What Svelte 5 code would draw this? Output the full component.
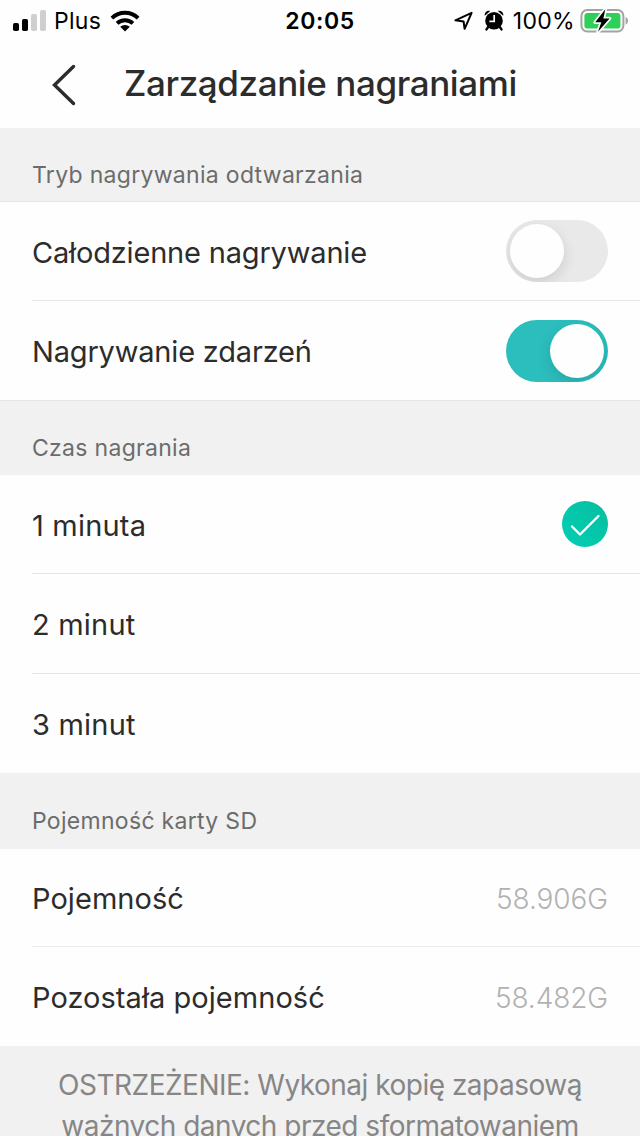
<script lang="ts">
	interface Option {
		id: number;
		label: string;
	}

	const durations: Option[] = [
		{ id: 1, label: '1 minuta' },
		{ id: 2, label: '2 minut' },
		{ id: 3, label: '3 minut' }
	];

	let allDay = $state(false);
	let events = $state(true);
	let duration = $state(1);
</script>

{#snippet toggle(label: string, checked: boolean, onclick: () => void)}
	<button
		type="button"
		class="toggle"
		class:checked
		role="switch"
		aria-checked={checked}
		aria-label={label}
		{onclick}
	>
		<span class="thumb"></span>
	</button>
{/snippet}

<div class="screen">
	<div class="status-bar">
		<div class="status-left">
			<svg class="signal" width="34" height="22" viewBox="0 0 34 22">
				<rect x="0" y="13" width="6" height="8" rx="1.8" />
				<rect x="9" y="9" width="6" height="12" rx="1.8" />
				<rect class="dim" x="18" y="4" width="6" height="17" rx="1.8" />
				<rect class="dim" x="27" y="0" width="6" height="21" rx="1.8" />
			</svg>
			<span class="carrier">Plus</span>
			<svg class="wifi" width="30" height="22" viewBox="0 0 30 22">
				<path d="M15 21.5 10.2 16.8a7 7 0 0 1 9.6 0Z" />
				<path class="arc" d="M7.1 13.4a11.6 11.6 0 0 1 15.8 0" />
				<path class="arc" d="M1.9 8.1a18.8 18.8 0 0 1 26.2 0" />
			</svg>
		</div>
		<span class="time">20:05</span>
		<div class="status-right">
			<svg class="location" width="20" height="20" viewBox="0 0 20 20">
				<path d="M1.4 9.3 17.6 1.8 10.6 17.8 9.6 10.4Z" />
			</svg>
			<svg class="alarm" width="20" height="22" viewBox="0 0 20 22">
				<circle cx="10" cy="10.8" r="8.8" />
				<path d="M.8 5.8C0 2.600 3.200-.2 6.200 1Z" />
				<path d="M19.200 5.800C20 2.600 16.800-.2 13.800 1Z" />
				<path class="leg" d="m4.200 17-1.700 2.400M15.800 17l1.700 2.400" />
				<path class="hands" d="M10.200 5v6.300H5.400" />
			</svg>
			<span class="percent">100%</span>
			<svg class="battery" width="49" height="26" viewBox="0 0 49 26">
				<rect class="shell" x="1.4" y="2" width="42" height="21.6" rx="6" />
				<rect class="fill" x="4.400" y="5" width="36" height="15.600" rx="3.2" />
				<path class="cap" d="M45.6 9c3.2 1.2 3.2 6.400 0 7.600Z" />
				<path class="bolt" d="M25.300 1.200 15.200 14.300h6.100l-3.300 9.500 11.600-13.300h-6.200Z" />
			</svg>
		</div>
	</div>

	<header class="nav">
		<button type="button" class="back" aria-label="Wstecz">
			<svg width="26" height="42" viewBox="0 0 26 42">
				<path d="M22.500 2.500 3.500 21l19 18.500" />
			</svg>
		</button>
		<h1>Zarządzanie nagraniami</h1>
	</header>

	<section class="modes">
		<h2 class="lined">Tryb nagrywania odtwarzania</h2>
		<div class="row">
			<span class="label">Całodzienne nagrywanie</span>
			{@render toggle('Całodzienne nagrywanie', allDay, () => (allDay = !allDay))}
		</div>
		<div class="row">
			<span class="label">Nagrywanie zdarzeń</span>
			{@render toggle('Nagrywanie zdarzeń', events, () => (events = !events))}
		</div>
	</section>

	<section class="durations">
		<h2>Czas nagrania</h2>
		{#each durations as option (option.id)}
			<button type="button" class="row" onclick={() => (duration = option.id)}>
				<span class="label">{option.label}</span>
				{#if duration === option.id}
					<svg class="check" width="46" height="46" viewBox="0 0 46 46">
						<defs>
							<linearGradient id="check-fill" x1="0" y1="1" x2="1" y2="0">
								<stop offset="0" stop-color="#00d0b4" />
								<stop offset="1" stop-color="#08bd9f" />
							</linearGradient>
						</defs>
						<circle cx="23" cy="23" r="23" fill="url(#check-fill)" />
						<path d="m10 25.500 8 8 18.500-18.500" />
					</svg>
				{/if}
			</button>
		{/each}
	</section>

	<section class="storage">
		<h2>Pojemność karty SD</h2>
		<div class="row">
			<span class="label">Pojemność</span>
			<span class="value">58.906G</span>
		</div>
		<div class="row">
			<span class="label">Pozostała pojemność</span>
			<span class="value">58.482G</span>
		</div>
	</section>

	<p class="warning">
		<span>OSTRZEŻENIE: Wykonaj kopię zapasową</span><br />
		<span>ważnych danych przed sformatowaniem</span>
	</p>
</div>

<style>
	:global(body) {
		margin: 0;
		overflow: hidden;
	}

	.screen {
		width: 640px;
		height: 1136px;
		overflow: hidden;
		background: #fefefe;
		color: #2c2c2c;
		font-family: Inter, 'Liberation Sans', sans-serif;
	}

	button {
		margin: 0;
		padding: 0;
		background: none;
		border: none;
		font: inherit;
		color: inherit;
		cursor: pointer;
	}

	svg {
		display: block;
		flex-shrink: 0;
	}

	/* Status bar */
	.status-bar {
		display: grid;
		grid-template-columns: 1fr auto 1fr;
		align-items: center;
		height: 40px;
		padding: 0 11px 0 13px;
		color: #000;
		font-size: 23px;
		line-height: 42px;
	}

	.status-left,
	.status-right {
		display: flex;
		align-items: center;
		height: 40px;
	}

	.status-right {
		justify-content: flex-end;
	}

	.signal .dim {
		fill: #cfcfcf;
	}

	.carrier {
		margin-left: 7px;
		letter-spacing: 0.3px;
	}

	.wifi {
		margin-left: 9px;
	}

	.wifi .arc {
		fill: none;
		stroke: #000;
		stroke-width: 4;
	}

	.time {
		font-weight: 600;
		letter-spacing: 0.6px;
		margin-right: 2px;
	}

	.location path {
		fill: none;
		stroke: #000;
		stroke-width: 2;
		stroke-linejoin: round;
	}

	.alarm {
		margin-left: 10px;
		margin-bottom: 1px;
	}

	.alarm .leg {
		fill: none;
		stroke: #000;
		stroke-width: 2.4;
		stroke-linecap: round;
	}

	.alarm .hands {
		fill: none;
		stroke: #fff;
		stroke-width: 1.7;
	}

	.percent {
		margin-left: 9px;
		letter-spacing: 0.3px;
	}

	.battery {
		margin-left: 5px;
	}

	.battery .shell {
		fill: none;
		stroke: #a3a3a3;
		stroke-width: 2;
	}

	.battery .fill {
		fill: #2fd058;
	}

	.battery .cap {
		fill: #a3a3a3;
	}

	.battery .bolt {
		fill: #000;
		stroke: #fefefe;
		stroke-width: 3.4;
		stroke-linejoin: round;
		paint-order: stroke;
	}

	/* Navigation */
	.nav {
		display: flex;
		align-items: center;
		height: 88px;
		padding-left: 51px;
	}

	.back {
		padding-top: 2px;
	}

	.back path {
		fill: none;
		stroke: #2c2c2c;
		stroke-width: 3.4;
		stroke-linecap: round;
		stroke-linejoin: miter;
	}

	h1 {
		margin: 0 0 2px 47px;
		font-size: 35px;
		font-weight: 500;
		line-height: 86px;
		letter-spacing: -0.4px;
		white-space: nowrap;
	}

	/* Groups */
	h2 {
		box-sizing: border-box;
		height: 74px;
		margin: 0;
		padding: 32px 32px 0;
		background: #f1f1f1;
		color: #6c6c6c;
		font-size: 23px;
		font-weight: 400;
		line-height: 30px;
		letter-spacing: 0.3px;
	}

	h2.lined {
		border-bottom: 1px solid #e6e6e6;
	}

	.row {
		display: flex;
		align-items: center;
		justify-content: space-between;
		box-sizing: border-box;
		width: 608px;
		height: 100px;
		margin-left: 32px;
		padding-right: 32px;
		border-bottom: 1px solid #e6e6e6;
		text-align: left;
	}

	h2 + .row {
		height: 99px;
	}

	.row:last-child {
		width: 640px;
		margin-left: 0;
		padding-left: 32px;
	}

	.durations .row:last-child {
		height: 99px;
		border-bottom: none;
	}

	.storage h2 {
		height: 76px;
		padding-top: 33px;
	}

	.storage .row {
		border-color: #ebebeb;
	}

	.storage h2 + .row {
		height: 98px;
	}

	.storage .row:last-child {
		height: 99px;
		border-bottom: none;
	}

	.label {
		padding-top: 2px;
		font-size: 29px;
		letter-spacing: 0.05px;
		white-space: nowrap;
	}

	.modes .label {
		letter-spacing: -0.18px;
	}

	.durations .label {
		letter-spacing: 0.2px;
	}

	.value {
		padding-top: 2px;
		color: #b2b2b2;
		font-size: 28px;
		font-weight: 300;
		letter-spacing: -0.1px;
	}

	/* Toggle */
	.toggle {
		display: flex;
		align-items: center;
		box-sizing: border-box;
		width: 102px;
		height: 62px;
		padding: 4px;
		overflow: hidden;
		background: #e9e9ea;
		border-radius: 31px;
	}

	.toggle.checked {
		justify-content: flex-end;
		background: #2bbebc;
	}

	.thumb {
		width: 54px;
		height: 54px;
		background: #fefefe;
		border-radius: 50%;
		box-shadow: 0 5px 14px rgba(0, 0, 0, 0.12);
	}

	.check path {
		fill: none;
		stroke: #fff;
		stroke-width: 2.4;
		stroke-linecap: round;
		stroke-linejoin: round;
	}

	/* Footer note */
	.warning {
		height: 120px;
		margin: 0;
		padding-top: 19px;
		background: #f1f1f1;
		color: #868686;
		font-size: 28px;
		line-height: 41px;
		letter-spacing: -0.5px;
		text-align: center;
		white-space: nowrap;
	}
</style>
